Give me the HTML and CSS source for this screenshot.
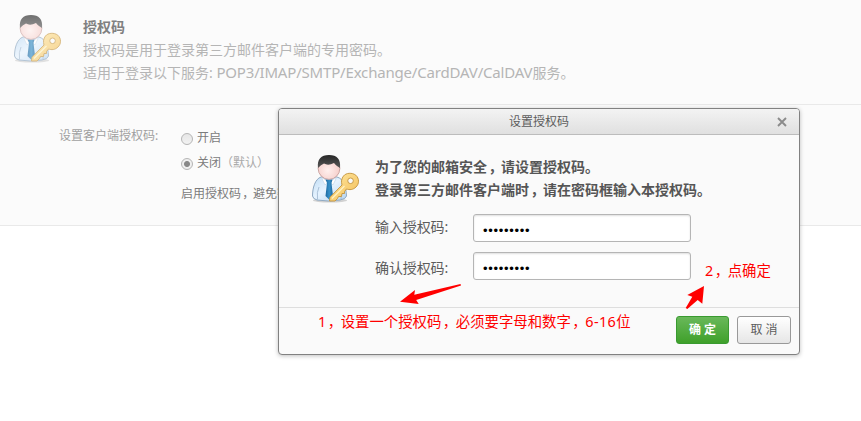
FILE: index.html
```html
<!DOCTYPE html>
<html lang="zh-CN">
<head>
<meta charset="utf-8">
<title>授权码</title>
<link rel="stylesheet" href="styles.css">
</head>
<body>
<svg width="0" height="0" class="defs" aria-hidden="true">
  <defs>
    <linearGradient id="hair" x1="0" y1="0" x2="0" y2="1"><stop offset="0" stop-color="#262626"/><stop offset="1" stop-color="#585858"/></linearGradient>
    <radialGradient id="face" cx=".45" cy=".6" r=".6"><stop offset="0" stop-color="#fff0ee"/><stop offset="1" stop-color="#f5cbc7"/></radialGradient>
    <linearGradient id="shirt" x1="0" y1="0" x2="1" y2="1"><stop offset="0" stop-color="#bfdcf4"/><stop offset=".45" stop-color="#e6f3ff"/><stop offset="1" stop-color="#b5d3ee"/></linearGradient>
    <linearGradient id="tie"><stop offset="0" stop-color="#1d689f"/><stop offset=".5" stop-color="#3690c8"/><stop offset="1" stop-color="#1d689f"/></linearGradient>
    <linearGradient id="gold" x1="0" y1="0" x2="1" y2="1"><stop offset="0" stop-color="#ffe9a4"/><stop offset="1" stop-color="#f3bd55"/></linearGradient>
    <symbol id="user-key" viewBox="0 0 54 56">
      <ellipse cx="22" cy="50.5" rx="17" ry="2" fill="#000" opacity=".16"/>
      <path d="M13 27C7 29 4.500 38 4.500 46Q5 49 9 50Q20 52 32 50Q38 49 38.500 46C38 37 36 29 29 27Z" fill="url(#shirt)" stroke="#8fa9c2" stroke-width="1"/>
      <path d="M9.500 49.500Q8.500 42 11 37M33 49Q34 43 32.500 39" fill="none" stroke="#9ab4cd" stroke-width=".8"/>
      <path d="M13.500 27.500L21 32L28.500 27.500L25 35L21 31L17 35Z" fill="#fff" stroke="#b4cbe0" stroke-width=".5"/>
      <path d="M17.500 29.500H24.500L23.500 33L25 46L21.500 50L17.500 46L19 33Z" fill="url(#tie)"/>
      <ellipse cx="21" cy="18.200" rx="10.900" ry="11.200" fill="url(#face)" stroke="#b98d89" stroke-width=".7"/>
      <path d="M10 18C9 9 13 5 21 5C29 5 33 9 32 18C30 16.500 28 15.500 26 13Q20 16 16 13.500Q13 14.500 10 18Z" fill="url(#hair)"/>
      <path d="M35.500 26C38 22.800 44 22.300 47.800 25.200C51.500 28.500 51.300 34 48 37C45 40 41.500 40 38.500 39L36.500 41.500V43.500H34L33.500 46.500H30.500L29.500 48.500L27 51H21.500L22 47.200L34 35C33 31.500 33.500 28.500 35.500 26ZM42.500 28A2.800 2.800 0 1 0 42.600 33.600A2.800 2.800 0 1 0 42.500 28Z" fill="url(#gold)" fill-rule="evenodd" stroke="#c3933b" stroke-width=".9" stroke-linejoin="round"/>
      <path d="M24 48.500L36.500 36" stroke="#fff4c8" stroke-width="1.100"/>
    </symbol>
  </defs>
</svg>

<main class="settings">
  <section class="intro">
    <svg class="avatar"><use href="#user-key"/></svg>
    <div class="intro-text">
      <h1>授权码</h1>
      <p>授权码是用于登录第三方邮件客户端的专用密码。</p>
      <p>适用于登录以下服务: <span class="protocols">POP3/IMAP/SMTP/Exchange/CardDAV/CalDAV</span>服务。</p>
    </div>
  </section>
  <section class="option">
    <div class="option-label">设置客户端授权码:</div>
    <div class="option-values">
      <div class="choice"><i class="radio"></i>开启</div>
      <div class="choice"><i class="radio checked"></i>关闭<span class="muted">（默认）</span></div>
      <p class="hint">启用授权码<span class="comma">，</span>避免密</p>
    </div>
  </section>
</main>

<div class="dialog" role="dialog">
  <header class="dialog-title">
    <span>设置授权码</span>
    <svg class="close" viewBox="0 0 10 10"><path d="M1 1L9 9M9 1L1 9"/></svg>
  </header>
  <div class="dialog-body">
    <svg class="avatar"><use href="#user-key"/></svg>
    <div class="form">
      <p class="lead">为了您的邮箱安全<span class="comma">，</span>请设置授权码。</p>
      <p class="lead">登录第三方邮件客户端时<span class="comma">，</span>请在密码框输入本授权码。</p>
      <div class="field first"><span class="field-label">输入授权码:</span><div class="input">•••••••••</div></div>
      <div class="field"><span class="field-label">确认授权码:</span><div class="input">•••••••••</div></div>
    </div>
  </div>
  <footer class="dialog-footer">
    <div class="button primary">确 定</div>
    <div class="button">取 消</div>
  </footer>
</div>

<svg class="arrows" viewBox="0 0 861 421">
  <path d="M400 301.700L415 290L414.300 294.800L460.500 284L461 285.500L416.200 300L418.700 304Z"/>
  <path d="M704 286L687.300 295L692.300 296.700L685.700 308L687.300 309L697.700 300L702.300 303.700Z"/>
</svg>
<div class="note note-code">1<span class="comma">，</span>设置一个授权码<span class="comma">，</span>必须要字母和数字<span class="comma">，</span><span class="range">6-16</span>位</div>
<div class="note note-confirm">2<span class="comma">，</span>点确定</div>
</body>
</html>
```
FILE: styles.css
```css
* { box-sizing: border-box; }
body {
  margin: 0;
  height: 421px;
  overflow: hidden;
  position: relative;
  background: #fff;
  font-family: "Noto Sans", "Noto Sans CJK SC", sans-serif;
  font-size: 12px;
  color: #7c7c7c;
}
h1, p { margin: 0; }
.defs { position: absolute; }
.avatar { display: block; flex: none; width: 54px; height: 56px; }
.comma { margin: 0 .4em 0 .1em; font-feature-settings: "halt"; }

.settings { background: #fbfbfb; border-bottom: 1px solid #e9e9e9; height: 226px; }
.intro {
  display: flex;
  height: 105px;
  padding: 10px 0 0 10px;
  border-bottom: 1px solid #e9e9e9;
}
.intro .avatar { opacity: .65; }
.intro-text { padding: 5px 0 0 19px; font-size: 14px; line-height: 23px; color: #b5b5b5; white-space: nowrap; }
.intro-text h1 { font-size: 14px; line-height: 23px; color: #808080; }
.protocols { font-size: 15px; line-height: 1; letter-spacing: -.18px; }
.option { display: flex; white-space: nowrap; }
.option-label { width: 181px; padding: 21px 0 0 59px; line-height: 20px; color: #a0a0a0; }
.option-values { padding-top: 19px; }
.choice { display: flex; align-items: center; height: 25px; }
.radio {
  width: 12px;
  height: 12px;
  margin: 4px 4px 0 0;
  border: 1px solid #b5b5b5;
  border-radius: 50%;
  background: linear-gradient(#e6e6e6, #f2f2f2);
}
.checked { background: radial-gradient(circle, #888 0 2.5px, #efefef 3.5px); }
.muted { color: #aaa; }
.hint { margin-top: 10px; line-height: 20px; }

.dialog {
  position: absolute;
  left: 278px;
  top: 108px;
  width: 522px;
  height: 247px;
  display: flex;
  flex-direction: column;
  border: 1px solid #818181;
  border-radius: 4px;
  background: #fafafa;
  box-shadow: 0 1px 4px rgba(0, 0, 0, .25);
  color: #5c5c5c;
  overflow: hidden;
}
.dialog-title {
  position: relative;
  height: 26px;
  flex: none;
  text-align: center;
  line-height: 25px;
  border-bottom: 1px solid #bcbcbc;
  background: linear-gradient(#f3f3f3, #e0e0e0);
}
.close {
  position: absolute;
  right: 12px;
  top: 8px;
  width: 10px;
  height: 10px;
  fill: none;
  stroke: #8b8b8b;
  stroke-width: 1.9;
}
.dialog-body { display: flex; height: 172px; padding: 15px 0 0 29px; }
.form { padding: 5px 0 0 13px; }
.lead { font-size: 14px; line-height: 23px; font-weight: bold; white-space: nowrap; color: #555; }
.field { display: flex; height: 28px; margin-top: 10px; font-size: 14px; line-height: 31px; }
.field.first { margin-top: 13px; line-height: 25px; }
.field-label { width: 98px; letter-spacing: -.1px; }
.input {
  width: 218px;
  height: 28px;
  padding-left: 9px;
  border: 1px solid #b5b5b5;
  border-radius: 3px;
  background: #fff;
  box-shadow: inset 0 1px 2px rgba(0, 0, 0, .13);
  color: #000;
  font-family: "Liberation Sans", sans-serif;
  font-size: 13px;
  line-height: 31px;
  letter-spacing: .7px;
}
.dialog-footer {
  display: flex;
  justify-content: flex-end;
  gap: 8px;
  height: 47px;
  padding: 8px 8px 0 0;
  border-top: 1px solid #dedede;
}
.button {
  width: 54px;
  height: 28px;
  border: 1px solid #999;
  border-radius: 3px;
  background: linear-gradient(#fff, #e6e6e6);
  line-height: 26px;
  text-align: center;
}
.button.primary {
  width: 53px;
  border-color: #399a30;
  background: linear-gradient(#69b85a, #3fa02a);
  color: #fff;
  font-weight: bold;
}
.arrows { position: absolute; left: 0; top: 0; width: 861px; height: 421px; fill: #f00; }
.note { position: absolute; color: #f00; font-size: 14.4px; line-height: 22px; white-space: nowrap; }
.range { letter-spacing: .4px; }
.note-code { left: 318px; top: 311px; }
.note-confirm { left: 705px; top: 260px; }
```
